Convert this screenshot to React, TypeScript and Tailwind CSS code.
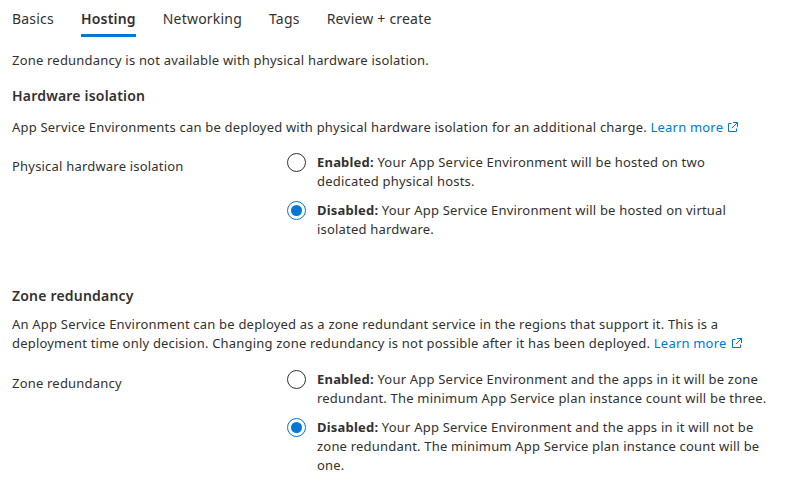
import React from "react";

const ExtIcon = () => (
  <svg width="11" height="11" viewBox="0 0 11 11" className="inline-block ml-[4px] -mt-[3px]" fill="none" stroke="#0078d4" strokeWidth="1">
    <path d="M4.5 1.5H1.5V9.5H9.5V6.5" />
    <path d="M6 0.5H10.5V5" />
    <path d="M10.5 0.5L5 6" />
  </svg>
);

const Radio = ({ checked }: { checked: boolean }) => (
  <div
    className={
      "w-[19px] h-[19px] rounded-full border flex items-center justify-center shrink-0 " +
      (checked ? "border-[#0078d4]" : "border-[#323130]")
    }
  >
    {checked && <div className="w-[11px] h-[11px] rounded-full bg-[#0078d4]" />}
  </div>
);

const Option = ({ checked, label, text, wide }: { checked: boolean; label: string; text: string; wide?: boolean }) => (
  <div className="flex gap-[11px]">
    <Radio checked={checked} />
    <div className={(wide ? "w-[456px]" : "w-[440px]") + " leading-[19px]"}>
      <span className="font-bold">{label}</span> {text}
    </div>
  </div>
);

export default function App() {
  return (
    <div
      className="w-[785px] h-[497px] bg-white text-[#323130] text-[13px] tracking-[0.2px] overflow-hidden"
      style={{ fontFamily: '"Noto Sans", "Open Sans", sans-serif' }}
    >
      <div className="flex gap-[27px] pl-[12px] pt-[9px] text-[14px]">
        {["Basics", "Hosting", "Networking", "Tags", "Review + create"].map((t) => (
          <div key={t} className="flex flex-col items-stretch">
            <div className={"leading-[20px] " + (t === "Hosting" ? "font-semibold" : "")}>{t}</div>
            <div className={"h-[3px] mt-[5px] " + (t === "Hosting" ? "bg-[#0078d4]" : "")} />
          </div>
        ))}
      </div>
      <div className="px-[12px]">
        <div className="mt-[13px] leading-[20px]">Zone redundancy is not available with physical hardware isolation.</div>
        <div className="mt-[16px] text-[14px] font-semibold leading-[20px]">Hardware isolation</div>
        <div className="mt-[11px] leading-[20px]">
          App Service Environments can be deployed with physical hardware isolation for an additional charge.{" "}
          <span className="text-[#0078d4]">Learn more</span>
          <ExtIcon />
        </div>
        <div className="flex mt-[16px]">
          <div className="w-[275px] leading-[19px] pt-[4px]">Physical hardware isolation</div>
          <div className="flex flex-col gap-[10px]">
            <Option checked={false} label="Enabled:" text="Your App Service Environment will be hosted on two dedicated physical hosts." />
            <Option checked={true} label="Disabled:" text="Your App Service Environment will be hosted on virtual isolated hardware." />
          </div>
        </div>
        <div className="mt-[47px] text-[14px] font-semibold leading-[20px]">Zone redundancy</div>
        <div className="mt-[9px] leading-[19px] w-[761px]">
          An App Service Environment can be deployed as a zone redundant service in the regions that support it. This is a
          deployment time only decision. Changing zone redundancy is not possible after it has been deployed.{" "}
          <span className="text-[#0078d4]">Learn more</span>
          <ExtIcon />
        </div>
        <div className="flex mt-[17px]">
          <div className="w-[275px] leading-[19px] pt-[4px]">Zone redundancy</div>
          <div className="flex flex-col gap-[10px]">
            <Option wide checked={false} label="Enabled:" text="Your App Service Environment and the apps in it will be zone redundant. The minimum App Service plan instance count will be three." />
            <Option wide checked={true} label="Disabled:" text="Your App Service Environment and the apps in it will not be zone redundant. The minimum App Service plan instance count will be one." />
          </div>
        </div>
      </div>
    </div>
  );
}
